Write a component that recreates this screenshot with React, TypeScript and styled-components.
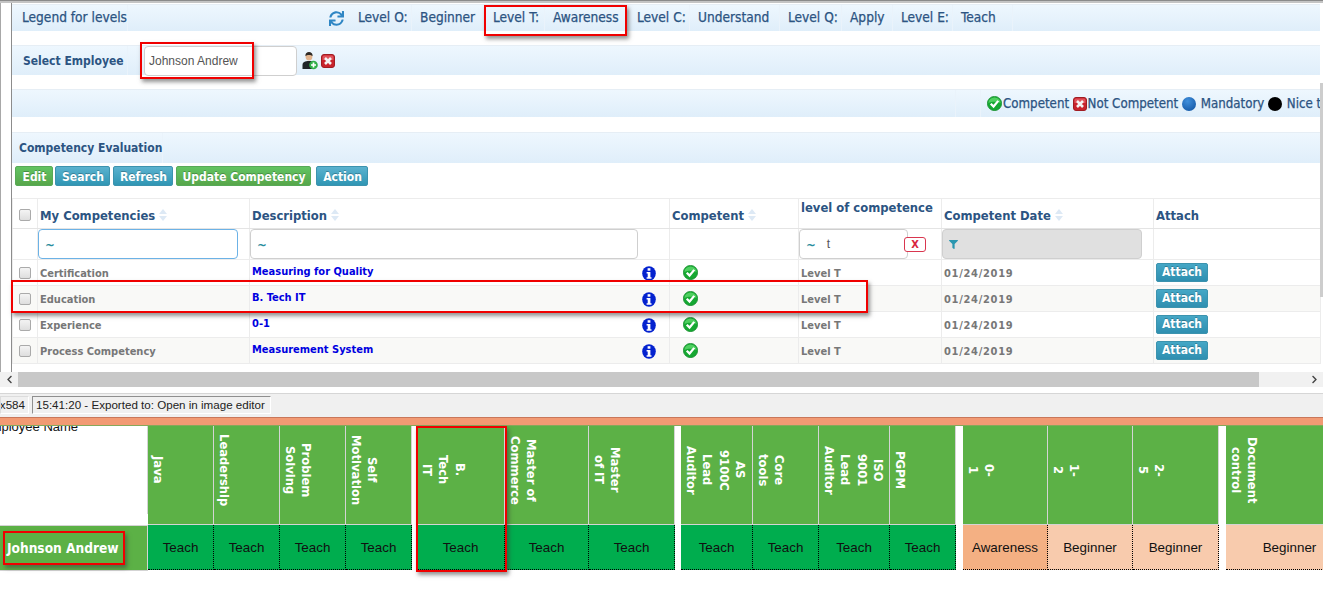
import React from "react";
import styled, { createGlobalStyle } from "styled-components";
import { FaSync, FaChevronLeft, FaChevronRight, FaFilter } from "react-icons/fa";

const CONDENSED = `"DejaVu Sans Condensed", "DejaVu Sans", sans-serif`;

const Global = createGlobalStyle`
  html, body { margin: 0; padding: 0; background: #fff; }
  body { font-family: "Liberation Sans", Arial, sans-serif; }
  * { box-sizing: border-box; }
`;

const Page = styled.div`
  position: relative;
  width: 1323px;
  height: 596px;
  overflow: hidden;
  background: #fff;
`;
const TopEdge = styled.div`
  height: 3px;
  background: #c4c4c4;
  border-top: 1px solid #8a8a8a;
`;
const Frame = styled.div`
  display: flex;
  height: 369px;
  padding-left: 10px;
  border-left: 1px solid #a8a8a8;
`;
const Content = styled.div`
  width: 1309px;
  flex: none;
  border-left: 1px solid #8c8c8c;
  padding-top: 1px;
  display: flex;
  flex-direction: column;
`;
const ScrollStrip = styled.div`
  flex: none;
  width: 3px;
  padding-top: 80px;
`;
const StripThumb = styled.div`
  height: 214px;
  background: #cdcdcd;
`;
const Bar = styled.div<{ $h: number; $mt: number }>`
  display: flex;
  align-items: center;
  height: ${(p) => p.$h}px;
  margin-top: ${(p) => p.$mt}px;
  flex: none;
  background: linear-gradient(#eef7fe, #dfeefa);
  border-top: 1px solid #e6eef5;
  color: #2c5482;
  font-family: ${CONDENSED};
  font-size: 13.6px;
  -webkit-text-stroke: 0.25px #2c5482;
`;
const BarCell = styled.div<{ $w?: number; $pl?: number; $pb?: number }>`
  display: flex;
  align-items: center;
  height: 100%;
  flex: none;
  width: ${(p) => (p.$w ? `${p.$w}px` : "auto")};
  padding-left: ${(p) => p.$pl ?? 8}px;
  padding-bottom: ${(p) => p.$pb ?? 2}px;
  border-right: 1px solid #eaf3fb;
  white-space: nowrap;
`;
const BarTitle = styled(BarCell)`
  font-size: 12px;
  font-weight: 700;
  -webkit-text-stroke: 0;
`;
const Spacer = styled.div<{ $w: number }>`
  flex: none;
  width: ${(p) => p.$w}px;
`;
const LegendSep = styled.div`
  flex: none;
  width: 26px;
  height: 100%;
  border-left: 1px solid #eaf3fb;
  border-right: 1px solid #eaf3fb;
`;
const RefreshIcon = styled(FaSync)`
  flex: none;
  color: #2f86c4;
  font-size: 15px;
`;
const NameInput = styled.div`
  flex: none;
  width: 153px;
  height: 30px;
  margin-left: 16px;
  border: 1px solid #cfcfcf;
  border-radius: 4px;
  background: #fff;
  padding-left: 4px;
  font-family: "Liberation Sans", Arial, sans-serif;
  font-size: 12px;
  line-height: 28px;
  color: #555;
  -webkit-text-stroke: 0;
`;
const IconRow = styled.div`
  display: flex;
  align-items: center;
  gap: 3px;
  margin-left: 5px;
`;
const StatusLegend = styled.div`
  display: flex;
  align-items: center;
  flex: none;
  height: 100%;
  padding-left: 6px;
  white-space: nowrap;
  font-size: 13.2px;
`;
const LegendItem = styled.span`
  margin: 0 3.5px 0 1px;
`;
const Dot = styled.span<{ $c: string }>`
  width: 14px;
  height: 14px;
  border-radius: 50%;
  background: ${(p) => p.$c};
  flex: none;
  margin-right: 4px;
`;
const Toolbar = styled.div`
  display: flex;
  gap: 2px;
  height: 20px;
  margin-top: 3px;
  padding-left: 3px;
  flex: none;
`;
const Btn = styled.button<{ $w: number; $green?: boolean; $ml?: number }>`
  width: ${(p) => p.$w}px;
  margin-left: ${(p) => p.$ml ?? 0}px;
  height: 20px;
  padding: 1px 0 0 1px;
  border: 1px solid ${(p) => (p.$green ? "#57a957" : "#3c93ae")};
  border-radius: 2px;
  background: ${(p) =>
    p.$green ? "linear-gradient(#62c462,#57a64a)" : "linear-gradient(#5bb2cf,#2f96b4)"};
  color: #fff;
  font-family: ${CONDENSED};
  font-size: 12px;
  font-weight: 700;
  white-space: nowrap;
  text-shadow: 0 -1px 0 rgba(0, 0, 0, 0.25);
`;
const Table = styled.table`
  table-layout: fixed;
  width: 1308px;
  margin-top: 12px;
  border-collapse: collapse;
  flex: none;
  font-family: ${CONDENSED};
`;
const Th = styled.th<{ $w: number; $up?: boolean; $flush?: boolean }>`
  width: ${(p) => p.$w}px;
  height: 30px;
  padding: ${(p) => (p.$up ? "0 0 12px 2px" : p.$flush ? "3px 0 0" : "3px 0 0 2px")};
  border: 1px solid #ececec;
  border-bottom: 1px solid #e4e4e4;
  text-align: left;
  color: #2c5482;
  font-size: 12.9px;
  font-weight: 700;
  white-space: nowrap;
  overflow: hidden;
`;
const FilterCell = styled.td`
  height: 31px;
  padding: 0;
  border: 1px solid #ececec;
`;
const FilterBox = styled.div<{ $w: number; $focus?: boolean; $gray?: boolean }>`
  display: flex;
  align-items: center;
  width: ${(p) => p.$w}px;
  height: 30px;
  padding-left: 6px;
  gap: 11px;
  border: 1px solid ${(p) => (p.$focus ? "#6cb2e6" : "#cfcfcf")};
  border-radius: 4px;
  background: ${(p) => (p.$gray ? "#e0e0e0" : "#fff")};
  color: #2a8c9c;
  font-size: 13px;
  font-weight: 700;
`;
const FilterWrap = styled.div`
  display: flex;
  align-items: center;
`;
const FilterValue = styled.span`
  color: #555;
  font-family: "Liberation Sans", Arial, sans-serif;
  font-weight: 400;
  font-size: 12px;
`;
const ClearBtn = styled.span`
  position: relative;
  flex: none;
  width: 22px;
  height: 15px;
  margin-left: -4px;
  border: 1px solid #d9364f;
  border-radius: 3px;
  background: #fff;
  color: #d9263f;
  font-size: 11px;
  font-weight: 700;
  line-height: 13px;
  text-align: center;
`;
const Row = styled.tr<{ $alt?: boolean }>`
  height: 26px;
  background: ${(p) => (p.$alt ? "#f9f9f7" : "#fff")};
`;
const Td = styled.td<{ $center?: boolean }>`
  height: 26px;
  padding: ${(p) => (p.$center ? "0" : "1px 0 0 2px")};
  border: 1px solid #ececec;
  color: #777;
  font-size: 11px;
  font-weight: 700;
  white-space: nowrap;
  text-align: ${(p) => (p.$center ? "center" : "left")};
  vertical-align: middle;
`;
const DateText = styled.span`
  letter-spacing: 0.7px;
`;
const DescWrap = styled.div`
  display: flex;
  align-items: center;
  justify-content: space-between;
  padding-right: 13px;
`;
const DescText = styled.span`
  color: #0000e0;
  margin-top: -4px;
`;
const CheckIconWrap = styled.div`
  display: flex;
  padding-left: 11px;
  margin-top: -2px;
`;
const AttachBtn = styled.button`
  display: block;
  width: 52px;
  height: 19px;
  padding: 0;
  margin-top: -2px;
  border: 1px solid #3c93ae;
  border-radius: 2px;
  background: linear-gradient(#45a7c6, #2f8fb0);
  color: #fff;
  font-family: ${CONDENSED};
  font-size: 12px;
  font-weight: 700;
  text-shadow: 0 -1px 0 rgba(0, 0, 0, 0.25);
`;
const Box = styled.span`
  display: block;
  width: 12px;
  height: 12px;
  margin: 0 auto;
  border: 1px solid #aaa;
  border-radius: 2px;
  background: linear-gradient(#f4f4f4, #dedede);
`;
const HScroll = styled.div`
  display: flex;
  align-items: center;
  height: 15px;
`;
const ScrollBtn = styled.div`
  width: 18px;
  height: 15px;
  flex: none;
  display: flex;
  align-items: center;
  justify-content: center;
  font-size: 9px;
  color: #444;
  background: #f1f1f1;
`;
const ScrollThumb = styled.div`
  width: 1241px;
  height: 15px;
  flex: none;
  background: #c8c8c8;
`;
const ScrollRest = styled.div`
  flex: 1;
  height: 15px;
  background: #f1f1f1;
`;
const StatusBar = styled.div`
  display: flex;
  align-items: flex-start;
  gap: 3px;
  height: 24px;
  margin-top: 6px;
  padding-top: 2px;
  background: #f0f0f0;
  border-top: 1px solid #d6d6d6;
  font-size: 11.6px;
  color: #222;
`;
const StatusChip = styled.div<{ $w: number; $sunk?: boolean }>`
  display: flex;
  justify-content: ${(p) => (p.$sunk ? "flex-start" : "flex-end")};
  flex: none;
  width: ${(p) => p.$w}px;
  height: 18px;
  line-height: 16px;
  padding: 0 3px;
  white-space: nowrap;
  overflow: hidden;
  border: 1px solid ${(p) => (p.$sunk ? "#8f8f8f" : "#dcdcdc")};
  border-right-color: #fff;
  border-bottom-color: #fff;
`;
const Orange = styled.div`
  position: relative;
  z-index: 1;
  height: 8px;
  background: #f29a73;
  border-top: 1px solid #c9775a;
  box-shadow: 0 1px 0 #86a85a;
`;
const Matrix = styled.div`
  display: flex;
  height: 146px;
`;
const FirstCol = styled.div`
  width: 148px;
  flex: none;
  display: flex;
  flex-direction: column;
`;
const NameHead = styled.div`
  height: 95px;
  flex: none;
  overflow: hidden;
  font-size: 13px;
  line-height: 15px;
  color: #111;
  margin-left: -18px;
  margin-top: -6px;
  white-space: nowrap;
  border-right: 1px solid #d4d4d4;
`;
const NameCell = styled.div`
  height: 46px;
  margin-top: 11px;
  display: flex;
  align-items: center;
  padding-left: 7px;
  background: #5cb146;
  border-top: 1px solid #d4d4d4;
  border-bottom: 1px solid #d4d4d4;
  border-right: 1px solid #d4d4d4;
  color: #fff;
  font-family: ${CONDENSED};
  font-size: 13.6px;
  font-weight: 700;
  white-space: nowrap;
`;
const Group = styled.div<{ $gap: number }>`
  display: flex;
  flex: none;
  margin-left: ${(p) => p.$gap}px;
`;
const Col = styled.div<{ $w: number }>`
  width: ${(p) => p.$w}px;
  flex: none;
  display: flex;
  flex-direction: column;
`;
const ColHead = styled.div`
  height: 100px;
  flex: none;
  display: flex;
  padding: 0 0 10px 1px;
  background: #5cb146;
  border-right: 1px solid #d4d4d4;
  border-bottom: 1px solid #d4d4d4;
`;
const VerticalText = styled.span`
  writing-mode: vertical-rl;
  white-space: pre-line;
  text-align: center;
  height: 90px;
  color: #fff;
  font-family: "DejaVu Sans", sans-serif;
  font-size: 11.6px;
  font-weight: 700;
  line-height: 16.5px;
`;
const levelColors: Record<string, string> = {
  Teach: "#00ad4e",
  Awareness: "#f4b083",
  Beginner: "#f8cbad",
};
const LevelCell = styled.div<{ $level: string }>`
  height: 45px;
  display: flex;
  align-items: center;
  justify-content: center;
  background: ${(p) => levelColors[p.$level]};
  border-right: 1px dotted #000;
  border-bottom: 1px dotted #000;
  color: #111;
  font-size: 13.4px;
`;
const Callout = styled.div<{ $x: number; $y: number; $w: number; $h: number }>`
  position: absolute;
  left: ${(p) => p.$x}px;
  top: ${(p) => p.$y}px;
  width: ${(p) => p.$w}px;
  height: ${(p) => p.$h}px;
  border: 2px solid #f00000;
  box-shadow: 2px 3px 4px rgba(60, 60, 60, 0.55);
  z-index: 2;
`;

const CheckIcon = () => (
  <svg width="15" height="15" viewBox="0 0 16 16">
    <circle cx="8" cy="8" r="7.6" fill="#16a832" stroke="#128a28" strokeWidth="0.8" />
    <path d="M1.5 7.5a6.5 6 0 0 1 13 0c-3-2-10-2-13 0z" fill="#4fd060" />
    <path d="M4 8.2l3 3 5-6" fill="none" stroke="#fff" strokeWidth="2.4" />
  </svg>
);
const CrossIcon = ({ s = 14 }: { s?: number }) => (
  <svg width={s} height={s} viewBox="0 0 14 14">
    <rect x="0.5" y="0.5" width="13" height="13" rx="2.5" fill="#c8232c" stroke="#a01c22" />
    <path d="M1.5 3a1.5 1.5 0 0 1 1.5-1.5h8A1.5 1.5 0 0 1 12.5 3v3h-11z" fill="#e0525a" />
    <path d="M4 4l6 6M10 4l-6 6" stroke="#f4f4f4" strokeWidth="2.6" />
  </svg>
);
const UserAddIcon = () => (
  <svg width="16" height="18" viewBox="0 0 16 18">
    <ellipse cx="7" cy="4.5" rx="3.4" ry="4" fill="#e2b48e" />
    <path d="M3.4 4c0-3 1.6-4 3.6-4s3.6 1 3.6 4C9 2.5 5 2.5 3.4 4z" fill="#2e2a26" />
    <path d="M0.5 17v-4c0-3 2.5-4 6.5-4s5 1 5 3v5z" fill="#1f2428" />
    <circle cx="11.5" cy="13" r="4.3" fill="#2fae47" />
    <path d="M11.5 10.5v5M9 13h5" stroke="#fff" strokeWidth="1.7" />
  </svg>
);
const InfoIcon = () => (
  <svg width="14" height="15" viewBox="0 0 14 15">
    <ellipse cx="7" cy="7.5" rx="6.8" ry="7.3" fill="#0422cf" />
    <rect x="5.6" y="2.2" width="2.8" height="2.5" fill="#fff" />
    <path d="M4.6 6h3.8v5.300h1.100v1.500H4.600v-1.500h1.100V7.500H4.600z" fill="#fff" />
  </svg>
);
const SortSvg = styled.svg`
  margin-left: 4px;
  vertical-align: -1px;
`;
const Sort = () => (
  <SortSvg width="8" height="12" viewBox="0 0 8 12">
    <path d="M4 0l4 5H0z" fill="#dde9f5" />
    <path d="M4 12l4-5H0z" fill="#dde9f5" />
  </SortSvg>
);
const FunnelIcon = styled(FaFilter)`
  color: #2a97b0;
  font-size: 9px;
`;

const columnGroups = [
  {
    gap: 0,
    cols: [
      { w: 66, t: "Java", l: "Teach" },
      { w: 66, t: "Leadership", l: "Teach" },
      { w: 66, t: "Problem\nSolving", l: "Teach" },
      { w: 66, t: "Self\nMotivation", l: "Teach" },
    ],
  },
  {
    gap: 5,
    cols: [
      { w: 88, t: "B.\nTech\nIT", l: "Teach" },
      { w: 84, t: "Master of\nCommerce", l: "Teach" },
      { w: 86, t: "Master\nof IT", l: "Teach" },
    ],
  },
  {
    gap: 6,
    cols: [
      { w: 72, t: "AS\n9100C\nLead\nAuditor", l: "Teach" },
      { w: 66, t: "Core\ntools", l: "Teach" },
      { w: 71, t: "ISO\n9001\nLead\nAuditor", l: "Teach" },
      { w: 66, t: "PGPM", l: "Teach" },
    ],
  },
  {
    gap: 7,
    cols: [
      { w: 85, t: "0-\n1", l: "Awareness" },
      { w: 85, t: "1-\n2", l: "Beginner" },
      { w: 86, t: "2-\n5", l: "Beginner" },
    ],
  },
  { gap: 7, cols: [{ w: 128, t: "Document\ncontrol", l: "Beginner" }] },
];

const rows = [
  { n: "Certification", d: "Measuring for Quality" },
  { n: "Education", d: "B. Tech IT", alt: true },
  { n: "Experience", d: "0-1" },
  { n: "Process Competency", d: "Measurement System", alt: true },
];

export default function App() {
  return (
    <Page>
      <Global />
      <TopEdge />
      <Frame>
        <Content>
          <Bar $h={27} $mt={0}>
            <BarCell $w={116} $pl={10}>Legend for levels</BarCell>
            <Spacer $w={201} />
            <RefreshIcon />
            <Spacer $w={6} />
            <BarCell $w={62}>Level O:</BarCell>
            <BarCell $w={73}>Beginner</BarCell>
            <BarCell $w={60}>Level T:</BarCell>
            <BarCell $w={84}>Awareness</BarCell>
            <BarCell $w={61}>Level C:</BarCell>
            <BarCell $w={90}>Understand</BarCell>
            <BarCell $w={62}>Level Q:</BarCell>
            <BarCell $w={51}>Apply</BarCell>
            <BarCell $w={60}>Level E:</BarCell>
            <BarCell $w={60}>Teach</BarCell>
          </Bar>
          <Bar $h={30} $mt={14}>
            <BarTitle $w={116} $pl={11} $pb={0}>Select Employee</BarTitle>
            <NameInput>Johnson Andrew</NameInput>
            <IconRow>
              <UserAddIcon />
              <CrossIcon />
            </IconRow>
          </Bar>
          <Bar $h={28} $mt={14}>
            <Spacer $w={943} />
            <LegendSep />
            <StatusLegend>
              <CheckIcon />
              <LegendItem>Competent</LegendItem>
              <CrossIcon />
              <LegendItem>Not Competent</LegendItem>
              <Dot $c="radial-gradient(circle at 40% 30%, #3f8fdc, #0d4f9e)" />
              <LegendItem>Mandatory</LegendItem>
              <Dot $c="#000" />
              <LegendItem>Nice to have</LegendItem>
            </StatusLegend>
          </Bar>
          <Bar $h={31} $mt={15}>
            <BarTitle $pl={7} $pb={1}>Competency Evaluation</BarTitle>
          </Bar>
          <Toolbar>
            <Btn $green $w={38}>Edit</Btn>
            <Btn $w={55}>Search</Btn>
            <Btn $w={60} $ml={1}>Refresh</Btn>
            <Btn $green $w={135} $ml={1}>Update Competency</Btn>
            <Btn $w={52} $ml={3}>Action</Btn>
          </Toolbar>
          <Table>
            <thead>
              <tr>
                <Th $w={25} $flush><Box /></Th>
                <Th $w={212}>My Competencies<Sort /></Th>
                <Th $w={420}>Description<Sort /></Th>
                <Th $w={129}>Competent<Sort /></Th>
                <Th $w={143} $up>level of competence</Th>
                <Th $w={212}>Competent Date<Sort /></Th>
                <Th $w={167}>Attach</Th>
              </tr>
              <tr>
                <FilterCell />
                <FilterCell>
                  <FilterBox $w={200} $focus>~</FilterBox>
                </FilterCell>
                <FilterCell>
                  <FilterBox $w={388}>~</FilterBox>
                </FilterCell>
                <FilterCell />
                <FilterCell>
                  <FilterWrap>
                    <FilterBox $w={109}>
                      ~<FilterValue>t</FilterValue>
                    </FilterBox>
                    <ClearBtn>X</ClearBtn>
                  </FilterWrap>
                </FilterCell>
                <FilterCell>
                  <FilterBox $w={200} $gray><FunnelIcon /></FilterBox>
                </FilterCell>
                <FilterCell />
              </tr>
            </thead>
            <tbody>
              {rows.map((r) => (
                <Row key={r.n} $alt={r.alt}>
                  <Td $center><Box /></Td>
                  <Td>{r.n}</Td>
                  <Td>
                    <DescWrap>
                      <DescText>{r.d}</DescText>
                      <InfoIcon />
                    </DescWrap>
                  </Td>
                  <Td><CheckIconWrap><CheckIcon /></CheckIconWrap></Td>
                  <Td>Level T</Td>
                  <Td><DateText>01/24/2019</DateText></Td>
                  <Td><AttachBtn>Attach</AttachBtn></Td>
                </Row>
              ))}
            </tbody>
          </Table>
        </Content>
        <ScrollStrip><StripThumb /></ScrollStrip>
      </Frame>
      <HScroll>
        <ScrollBtn><FaChevronLeft /></ScrollBtn>
        <ScrollThumb />
        <ScrollRest />
        <ScrollBtn><FaChevronRight /></ScrollBtn>
      </HScroll>
      <StatusBar>
        <StatusChip $w={29}>6x584</StatusChip>
        <StatusChip $w={239} $sunk>15:41:20 - Exported to: Open in image editor</StatusChip>
      </StatusBar>
      <Orange />
      <Matrix>
        <FirstCol>
          <NameHead>Employee Name</NameHead>
          <NameCell>Johnson Andrew</NameCell>
        </FirstCol>
        {columnGroups.map((g, i) => (
          <Group key={i} $gap={g.gap}>
            {g.cols.map((c) => (
              <Col key={c.t} $w={c.w}>
                <ColHead><VerticalText>{c.t}</VerticalText></ColHead>
                <LevelCell $level={c.l}>{c.l}</LevelCell>
              </Col>
            ))}
          </Group>
        ))}
      </Matrix>
      <Callout $x={484} $y={5} $w={143} $h={31} />
      <Callout $x={140} $y={42} $w={114} $h={37} />
      <Callout $x={11} $y={280} $w={857} $h={33} />
      <Callout $x={3} $y={531} $w={122} $h={34} />
      <Callout $x={416} $y={426} $w={91} $h={146} />
    </Page>
  );
}
